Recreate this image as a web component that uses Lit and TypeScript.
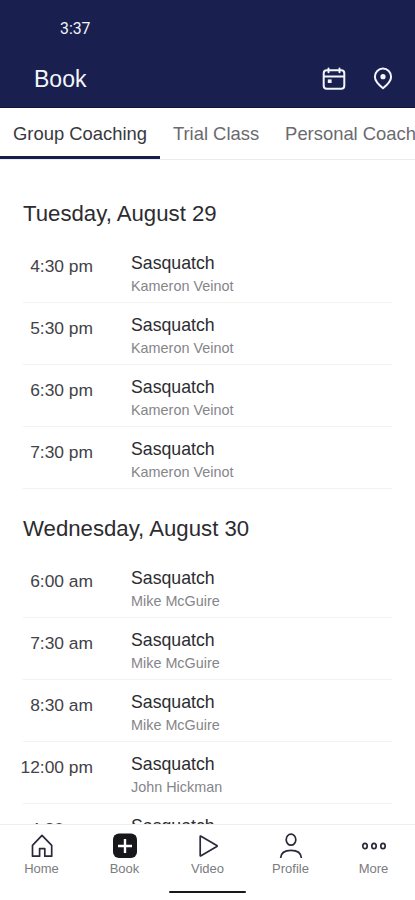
import { LitElement, html, css, svg } from "lit";
import { customElement } from "lit/decorators.js";
import { classMap } from "lit/directives/class-map.js";

interface Session { time: string; title: string; coach: string; }
interface Day { label: string; sessions: Session[]; }

const session = (time: string, coach: string): Session => ({ time, title: "Sasquatch", coach });

const days: Day[] = [
  {
    label: "Tuesday, August 29",
    sessions: ["4:30 pm", "5:30 pm", "6:30 pm", "7:30 pm"].map((t) => session(t, "Kameron Veinot")),
  },
  {
    label: "Wednesday, August 30",
    sessions: [
      session("6:00 am", "Mike McGuire"),
      session("7:30 am", "Mike McGuire"),
      session("8:30 am", "Mike McGuire"),
      session("12:00 pm", "John Hickman"),
      session("4:30 pm", "John Hickman"),
    ],
  },
];

const tabs = ["Group Coaching", "Trial Class", "Personal Coaching"];

const navItems = [
  { label: "Home", icon: svg`<path d="M4.5 24.2V13.4L14 3.4l9.7 10v10.8h-6.9v-7.6h-5.2v7.6z"/>` },
  {
    label: "Book",
    icon: svg`<rect class="solid" x="2" y="1.6" width="24" height="24.4" rx="6"/><path class="plus" d="M14 7v14M7 14h14"/>`,
  },
  { label: "Video", icon: svg`<path d="M6.2 4.6v18.8q0 .8.8.4L22.8 14.6q.7-.6 0-1.2L7 4.2q-.8-.4-.8.4z"/>` },
  {
    label: "Profile",
    icon: svg`<ellipse cx="14" cy="7.7" rx="4.8" ry="5.5"/><path d="M3.6 26C4 20.3 8 18.4 14 18.4S24 20.3 24.4 26"/>`,
  },
  { label: "More", icon: svg`<ellipse cx="5" cy="14" rx="2.2" ry="2.7"/><ellipse cx="14" cy="14" rx="2.2" ry="2.7"/><ellipse cx="23" cy="14" rx="2.2" ry="2.7"/>` },
];

@customElement("app-root")
export class AppRoot extends LitElement {
  static styles = css`
    :host {
      display: flex;
      flex-direction: column;
      height: 900px;
      overflow: hidden;
      background: #fff;
      color: #2c2c30;
      font-family: "Liberation Sans", Arial, sans-serif;
    }
    .header {
      flex: none;
      box-sizing: border-box;
      height: 108px;
      background: #19204f;
      border-bottom: 1px solid #10133f;
      color: #f4f5fa;
    }
    .status {
      height: 50px;
      padding: 3px 0 0 60px;
      font: 15.8px/52px Roboto, "Liberation Sans", sans-serif;
      box-sizing: border-box;
    }
    .bar {
      display: flex;
      align-items: center;
      height: 57px;
      padding: 0 20px 0 34px;
    }
    .title {
      flex: 1;
      padding-top: 1px;
      font-size: 23px;
    }
    .bar svg {
      display: block;
      fill: none;
      stroke: #f4f5fa;
      stroke-width: 2;
      stroke-linejoin: round;
      stroke-linecap: round;
    }
    .bar svg .dot { fill: #f4f5fa; stroke: none; }
    .calendar { margin-right: 25px; }
    .tabs {
      flex: none;
      display: flex;
      box-sizing: border-box;
      height: 52px;
      border-bottom: 1px solid #ececee;
      overflow: hidden;
    }
    .tab {
      box-sizing: border-box;
      height: 51px;
      padding: 0 13px;
      font-size: 18.4px;
      line-height: 52px;
      white-space: nowrap;
      color: #6a6a6f;
    }
    .tab.active {
      color: #38383d;
      border-bottom: 3px solid #191b4a;
    }
    .list {
      flex: 1;
      min-height: 0;
      overflow: hidden;
      padding: 14px 23px 0;
    }
    .day {
      height: 67px;
      box-sizing: border-box;
      padding-top: 27px;
      font-size: 22.2px;
      line-height: 26px;
      white-space: nowrap;
    }
    .row {
      display: grid;
      grid-template-columns: 70px 1fr;
      column-gap: 38px;
      box-sizing: border-box;
      height: 62px;
      border-bottom: 1px solid #f2f2f3;
    }
    .time {
      display: flex;
      justify-content: flex-end;
      padding-top: 15px;
      font-size: 17.4px;
      line-height: 20px;
      white-space: nowrap;
      color: #424247;
    }
    .name {
      padding-top: 12px;
      font-size: 17.7px;
      line-height: 20px;
    }
    .coach {
      padding-top: 5px;
      font-size: 14.4px;
      line-height: 17px;
      color: #85858a;
    }
    .nav {
      flex: none;
      box-sizing: border-box;
      height: 76px;
      border-top: 1px solid #efeff0;
      background: #fff;
    }
    .items { display: flex; height: 65px; }
    .item {
      flex: 1;
      display: flex;
      flex-direction: column;
      align-items: center;
      padding-top: 7px;
      font-size: 13px;
      line-height: 15px;
      color: #7b7b80;
    }
    .item svg {
      display: block;
      margin-bottom: 1px;
      fill: none;
      stroke: #29293a;
      stroke-width: 1.7;
      stroke-linejoin: round;
    }
    .item svg .solid { fill: #17171c; stroke: none; }
    .item svg .plus { stroke: #fff; stroke-width: 2.4; }
    .handle {
      width: 77px;
      height: 2px;
      margin: 1px auto 0;
      border-radius: 1px;
      background: #17171c;
    }
  `;

  render() {
    return html`
      <header class="header">
        <div class="status">3:37</div>
        <div class="bar">
          <div class="title">Book</div>
          <svg class="calendar" width="24" height="24" viewBox="0 0 24 24">
            <rect x="1.7" y="3.2" width="20.6" height="18.6" rx="3"/>
            <path d="M2 9.6h20M6.5 1.6v3.6M17.5 1.6v3.6"/>
            <rect class="dot" x="5.8" y="12.4" width="3.8" height="3.6"/>
          </svg>
          <svg width="24" height="24" viewBox="0 0 24 24">
            <path d="M12 21.2C7.4 17.5 3.9 13.6 3.9 9.7a8.1 8.1 0 0 1 16.2 0c0 3.9-3.5 7.8-8.1 11.5z"/>
            <circle class="dot" cx="12" cy="9.7" r="2.6"/>
          </svg>
        </div>
      </header>
      <nav class="tabs">
        ${tabs.map((t, i) => html`<div class=${classMap({ tab: true, active: i === 0 })}>${t}</div>`)}
      </nav>
      <main class="list">
        ${days.map((d) => html`
          <div class="day">${d.label}</div>
          ${d.sessions.map((s) => html`
            <div class="row">
              <div class="time">${s.time}</div>
              <div>
                <div class="name">${s.title}</div>
                <div class="coach">${s.coach}</div>
              </div>
            </div>`)}
        `)}
      </main>
      <footer class="nav">
        <div class="items">
          ${navItems.map((n) => html`
            <div class="item">
              <svg width="28" height="28" viewBox="0 0 28 28">${n.icon}</svg>
              ${n.label}
            </div>`)}
        </div>
        <div class="handle"></div>
      </footer>
    `;
  }
}
